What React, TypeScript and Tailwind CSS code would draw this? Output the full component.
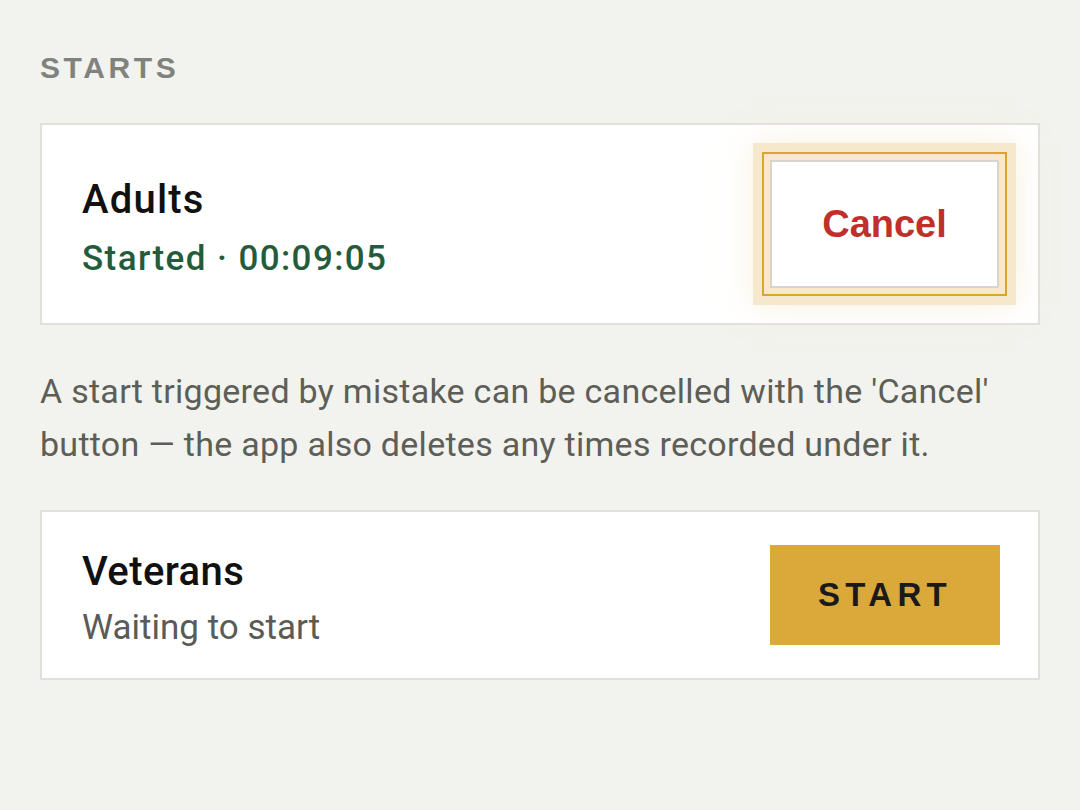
import React from 'react';

const sans = "font-['Roboto','Liberation_Sans',sans-serif]";

export default function App() {
  return (
    <div className={`min-h-[810px] w-[1080px] bg-[#f2f2ee] px-10 pt-[50px] ${sans}`}>
      <h2 className="font-['Liberation_Sans',Arial,sans-serif] text-[30px] font-bold leading-[36px] tracking-[0.12em] text-[#80837d]">
        STARTS
      </h2>

      {/* Running start */}
      <div className="mt-[37px] flex h-[202px] items-center justify-between border-2 border-[#e1e1dc] bg-white pl-10 pr-[39px]">
        <div className="pt-2">
          <div className="text-[40px] font-medium leading-[44px] tracking-[0.03em] text-[#111111]">Adults</div>
          <div className="mt-[17px] text-[35px] font-medium leading-[40px] tracking-[0.04em] text-[#245c3b]">
            Started · 00:09:05
          </div>
        </div>
        <button className="h-[128px] w-[229px] border-2 border-[#d8d4cc] bg-white font-['Liberation_Sans',Arial,sans-serif] text-[38px] font-bold text-[#c0302b] outline-2 outline-offset-[6px] outline-[#d8a530] shadow-[0_0_0_17px_#f5e8cc,0_0_30px_17px_rgba(245,232,204,0.6)]">
          Cancel
        </button>
      </div>

      <p className="mt-10 text-[34px] leading-[53px] tracking-[0.008em] text-[#5d5e58]">
        A start triggered by mistake can be cancelled with the 'Cancel' button — the app also deletes any times recorded under it.
      </p>

      {/* Waiting start */}
      <div className="mt-[39px] flex h-[170px] items-center justify-between border-2 border-[#e1e1dc] bg-white pl-10 pr-[38px]">
        <div className="pt-[7px]">
          <div className="text-[40px] font-medium leading-[44px] tracking-[0.01em] text-[#111111]">Veterans</div>
          <div className="mt-[14px] text-[35px] leading-[40px] text-[#5a5b56]">Waiting to start</div>
        </div>
        <button className="h-[100px] w-[230px] bg-[#dba93a] font-['Liberation_Sans',Arial,sans-serif] text-[33px] font-bold tracking-[0.16em] text-[#1a1a1a]">
          START
        </button>
      </div>
    </div>
  );
}
